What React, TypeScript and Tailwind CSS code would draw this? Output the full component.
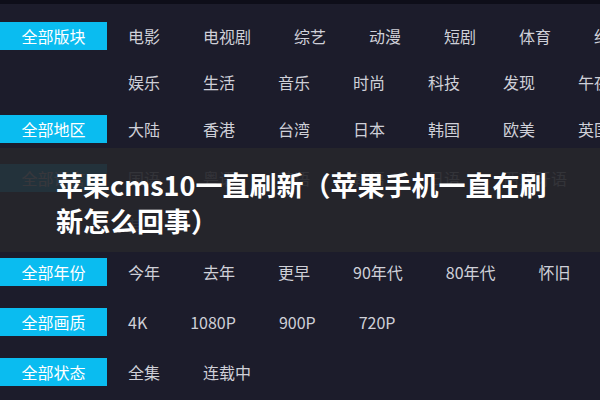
const rows: { label?: string; items: string[]; top: string }[] = [
  { label: "全部版块", items: ["电影", "电视剧", "综艺", "动漫", "短剧", "体育", "纪录片"], top: "mt-[18px]" },
  { items: ["娱乐", "生活", "音乐", "时尚", "科技", "发现", "午夜"], top: "mt-[18px]" },
  { label: "全部地区", items: ["大陆", "香港", "台湾", "日本", "韩国", "欧美", "英国"], top: "mt-[19px]" },
  { label: "全部语言", items: ["国语", "粤语", "英语", "韩语", "日语", "西班牙语"], top: "mt-[21px]" },
  { items: ["其它"], top: "mt-[19px]" },
  { label: "全部年份", items: ["今年", "去年", "更早", "90年代", "80年代", "怀旧"], top: "mt-[19px]" },
  { label: "全部画质", items: ["4K", "1080P", "900P", "720P"], top: "mt-[22px]" },
  { label: "全部状态", items: ["全集", "连载中"], top: "mt-[22px]" },
];

export default function App() {
  return (
    <div
      className="relative w-[600px] h-[400px] overflow-hidden bg-[#1c1c2b]"
      style={{ fontFamily: '"Noto Sans CJK SC", "Noto Sans", sans-serif' }}
    >
      <div className="h-[4px] bg-[#0e0e19]" />
      {rows.map((row, i) => (
        <div key={i} className={`flex items-center h-[28px] ${row.top}`}>
          <div
            className={`w-[107px] h-[28px] shrink-0 flex items-center justify-center text-[16px] text-white ${
              row.label ? "bg-[#0abcf0]" : ""
            }`}
          >
            {row.label}
          </div>
          <div className="flex items-center gap-[43px] ml-[21px] text-[16px] text-[#cfd0d8] whitespace-nowrap">
            {row.items.map((it) => (
              <span key={it}>{it}</span>
            ))}
          </div>
        </div>
      ))}

      {/* title banner over the filter list */}
      <div className="absolute left-0 right-0 top-[148px] h-[104px] bg-[#26262b]/[0.92] flex items-center pl-[56px]">
        <h1 className="text-[27px] leading-[36px] font-bold text-white whitespace-nowrap mt-[6px]">
          苹果cms10一直刷新（苹果手机一直在刷
          <br />
          新怎么回事）
        </h1>
      </div>
    </div>
  );
}
